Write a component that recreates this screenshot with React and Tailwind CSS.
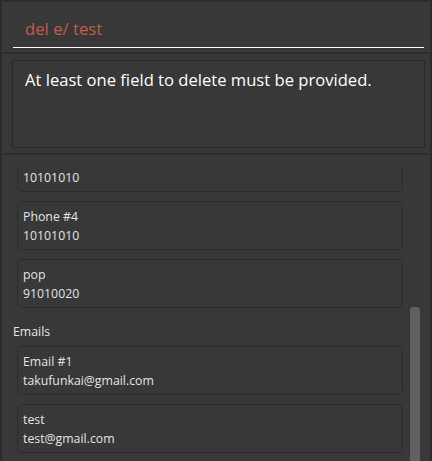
import React from 'react';

const font = { fontFamily: '"Open Sans", "Noto Sans", sans-serif' };

const Card = ({ label, value }) => (
    <div className="w-[386px] ml-[15px] rounded-[5px] border border-[#2c2c2c] bg-[#383838] pl-[5px] pt-[5px] pb-[4px] text-[12.3px] leading-[19px] text-[#e4e4e4]">
        {label && <div>{label}</div>}
        <div>{value}</div>
    </div>
);

const App = () => {
    return (
        <div className="w-[432px] h-[461px] bg-[#383838] overflow-hidden flex flex-col border-t-[2px] border-l-[2px] border-r-[2px] border-[#2c2c2c]" style={font}>
            {/* command box */}
            <div className="h-[50px] pl-[11px] pr-[5px] flex flex-col">
                <div className="h-[45px] flex items-center pl-[12px] pt-[8px] text-[16.7px] text-[#c45a4a]">
                    del e/ test
                </div>
                <div className="h-[1px] bg-white mr-[1px]" />
            </div>
            <div className="h-[2px] bg-[#2c2c2c]" />

            {/* result display */}
            <div className="h-[99px] pl-[10px] pr-[5px] pt-[6px] pb-[5px]">
                <div className="h-full border border-[#2a2a2a] pl-[12px] pt-[8px] text-[16.6px] leading-[22px] text-white">
                    At least one field to delete must be provided.
                </div>
            </div>
            <div className="h-[2px] bg-[#2c2c2c]" />

            {/* list, scrolled part way down */}
            <div className="flex-1 relative pt-[11px] min-h-0">
                <div className="h-full overflow-hidden">
                    <div className="flex flex-col gap-[9px] mt-[-4px]">
                        <Card value="10101010" />
                        <Card label="Phone #4" value="10101010" />
                        <Card label="pop" value="91010020" />
                    </div>
                    <div className="mt-[14px] mb-[5px] pl-[11px] text-[12.3px] leading-[19px] text-[#e4e4e4]">Emails</div>
                    <div className="flex flex-col gap-[9px]">
                        <Card label="Email #1" value="takufunkai@gmail.com" />
                        <Card label="test" value="test@gmail.com" />
                    </div>
                </div>
                <div className="absolute left-[408px] top-[152px] w-[10px] h-[200px] rounded-t-[3px] bg-[#606060]" />
            </div>
        </div>
    );
};

export default App;
